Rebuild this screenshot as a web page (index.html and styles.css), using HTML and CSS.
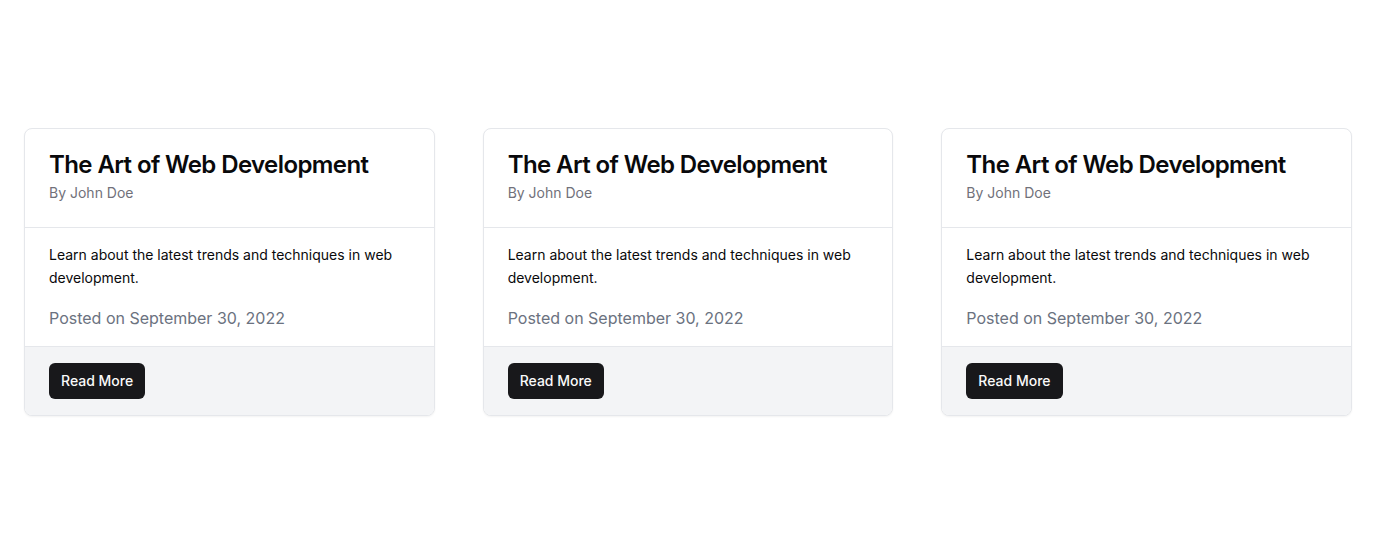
FILE: index.html
```html
<!DOCTYPE html>
<html lang="en">
<head>
<meta charset="utf-8">
<title>Cards</title>
<link rel="stylesheet" href="styles.css">
</head>
<body>
<main class="page">
  <div class="grid">
    <article class="card">
      <header class="card-header">
        <h2 class="card-title">The Art of Web Development</h2>
        <p class="card-sub">By John Doe</p>
      </header>
      <div class="card-content">
        <p class="card-text">Learn about the latest trends and techniques in web development.</p>
        <p class="card-date">Posted on September 30, 2022</p>
      </div>
      <footer class="card-footer">
        <button class="btn">Read More</button>
      </footer>
    </article>
    <article class="card">
      <header class="card-header">
        <h2 class="card-title">The Art of Web Development</h2>
        <p class="card-sub">By John Doe</p>
      </header>
      <div class="card-content">
        <p class="card-text">Learn about the latest trends and techniques in web development.</p>
        <p class="card-date">Posted on September 30, 2022</p>
      </div>
      <footer class="card-footer">
        <button class="btn">Read More</button>
      </footer>
    </article>
    <article class="card">
      <header class="card-header">
        <h2 class="card-title">The Art of Web Development</h2>
        <p class="card-sub">By John Doe</p>
      </header>
      <div class="card-content">
        <p class="card-text">Learn about the latest trends and techniques in web development.</p>
        <p class="card-date">Posted on September 30, 2022</p>
      </div>
      <footer class="card-footer">
        <button class="btn">Read More</button>
      </footer>
    </article>
  </div>
</main>
</body>
</html>
```

FILE: styles.css
```css
* { box-sizing: border-box; }
html, body { margin: 0; padding: 0; }
body {
  font-family: Inter, "Noto Sans", sans-serif;
  background: #ffffff;
  color: #09090b;
}
.page {
  min-height: 544px;
  display: flex;
  align-items: center;
  padding: 0 24px;
}
.grid {
  width: 100%;
  display: grid;
  grid-template-columns: repeat(3, 1fr);
  gap: 48px;
}
.card {
  border: 1px solid #e5e7eb;
  border-radius: 8px;
  background: #fff;
  box-shadow: 0 1px 2px rgba(0,0,0,0.05);
  overflow: hidden;
}
.card-header {
  padding: 24px;
  border-bottom: 1px solid #e5e7eb;
  display: flex;
  flex-direction: column;
  gap: 6px;
}
.card-title {
  margin: 0;
  font-size: 24px;
  line-height: 24px;
  font-weight: 600;
  letter-spacing: -0.025em;
  color: #09090b;
}
.card-sub {
  margin: 0;
  font-size: 14px;
  line-height: 20px;
  color: #71717a;
}
.card-content {
  padding: 16px 24px;
}
.card-text {
  margin: 0 0 16px;
  font-size: 14px;
  line-height: 1.625;
  color: #09090b;
}
.card-date {
  margin: 0;
  font-size: 16px;
  line-height: 24px;
  color: #6b7280;
}
.card-footer {
  background: #f3f4f6;
  border-top: 1px solid #e5e7eb;
  padding: 16px 24px;
  display: flex;
}
.btn {
  font-family: inherit;
  font-size: 14px;
  font-weight: 500;
  line-height: 20px;
  height: 36px;
  padding: 0 12px;
  border: none;
  border-radius: 6px;
  background: #18181b;
  color: #fafafa;
  cursor: pointer;
}
```
